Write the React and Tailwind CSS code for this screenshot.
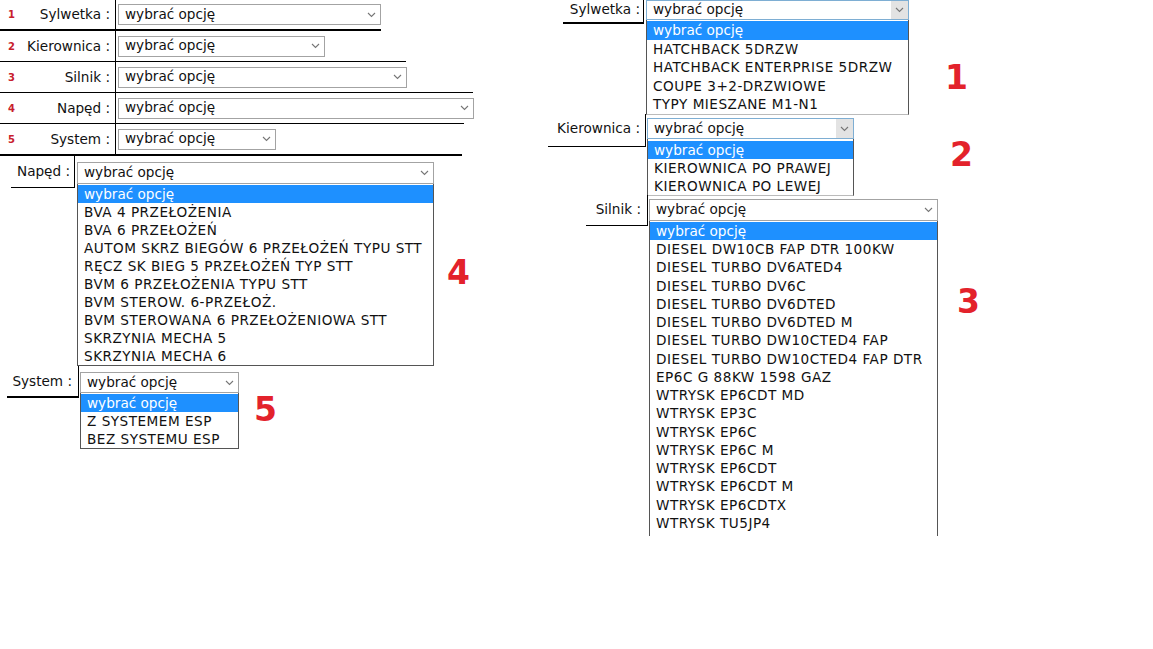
import React from "react";

const FONT = "font-['DejaVu_Sans',Verdana,sans-serif]";

function Chevron() {
  return (
    <svg width="9" height="6" viewBox="0 0 9 6" className="shrink-0">
      <path d="M1 1 L4.5 4.5 L8 1" fill="none" stroke="#767676" strokeWidth="1.1" />
    </svg>
  );
}

function Sel({ className, focused }) {
  return (
    <div
      className={`flex items-center justify-between bg-white border ${
        focused ? "border-[#7eaed3]" : "border-[#a3a3a3]"
      } ${className}`}
    >
      <span className="pl-[6px] text-[13.6px] leading-none text-[#111] whitespace-nowrap">wybrać opcję</span>
      {focused ? (
        <div className="flex items-center justify-center self-stretch w-[17px] bg-[#e3e3e3]">
          <Chevron />
        </div>
      ) : (
        <div className="pr-[4px] flex items-center">
          <Chevron />
        </div>
      )}
    </div>
  );
}

function List({ items, className, rowClass }) {
  return (
    <div className={`bg-white border-x border-b border-[#555] overflow-hidden ${className}`}>
      <div className={`bg-[#1e90ff] text-white pl-[6px] flex items-center text-[13.6px] whitespace-nowrap ${rowClass}`}>
        wybrać opcję
      </div>
      {items.map((t) => (
        <div
          key={t}
          className={`pl-[6px] flex items-center text-[13.6px] tracking-[0.5px] text-[#111] whitespace-nowrap ${rowClass}`}
        >
          {t}
        </div>
      ))}
    </div>
  );
}

function Row({ num, label, selClass, hClass }) {
  return (
    <div className={`flex items-center ${hClass}`}>
      <div className="w-[116px] self-stretch border-r border-black flex items-center justify-between pr-[5px]">
        <span className="pl-[8px] text-[10px] font-bold text-[#c8202c]">{num}</span>
        <span className="text-[13.6px] text-[#111] whitespace-nowrap">{label}</span>
      </div>
      <Sel className={`ml-[2px] h-[21px] ${selClass}`} />
    </div>
  );
}

function Big({ children, className }) {
  return (
    <div className={`absolute text-[33px] font-bold leading-none text-[#e3222b] ${className}`}>{children}</div>
  );
}

export default function App() {
  const naped = [
    "BVA 4 PRZEŁOŻENIA",
    "BVA 6 PRZEŁOŻEŃ",
    "AUTOM SKRZ BIEGÓW 6 PRZEŁOŻEŃ TYPU STT",
    "RĘCZ SK BIEG 5 PRZEŁOŻEŃ TYP STT",
    "BVM 6 PRZEŁOŻENIA TYPU STT",
    "BVM STEROW. 6-PRZEŁOŻ.",
    "BVM STEROWANA 6 PRZEŁOŻENIOWA STT",
    "SKRZYNIA MECHA 5",
    "SKRZYNIA MECHA 6",
  ];
  const system = ["Z SYSTEMEM ESP", "BEZ SYSTEMU ESP"];
  const sylwetka = [
    "HATCHBACK 5DRZW",
    "HATCHBACK ENTERPRISE 5DRZW",
    "COUPE 3+2-DRZWIOWE",
    "TYPY MIESZANE M1-N1",
  ];
  const kier = ["KIEROWNICA PO PRAWEJ", "KIEROWNICA PO LEWEJ"];
  const silnik = [
    "DIESEL DW10CB FAP DTR 100KW",
    "DIESEL TURBO DV6ATED4",
    "DIESEL TURBO DV6C",
    "DIESEL TURBO DV6DTED",
    "DIESEL TURBO DV6DTED M",
    "DIESEL TURBO DW10CTED4 FAP",
    "DIESEL TURBO DW10CTED4 FAP DTR",
    "EP6C G 88KW 1598 GAZ",
    "WTRYSK EP6CDT MD",
    "WTRYSK EP3C",
    "WTRYSK EP6C",
    "WTRYSK EP6C M",
    "WTRYSK EP6CDT",
    "WTRYSK EP6CDT M",
    "WTRYSK EP6CDTX",
    "WTRYSK TU5JP4",
  ];

  return (
    <div className={`relative w-[1153px] h-[649px] bg-white overflow-hidden ${FONT}`}>
      {/* Section A: form rows */}
      <div className="absolute left-0 top-0 flex flex-col">
        <Row num="1" label="Sylwetka :" selClass="w-[263px]" hClass="h-[29px]" />
        <div className="h-[2px] w-[381px] bg-black" />
        <Row num="2" label="Kierownica :" selClass="w-[207px]" hClass="h-[30px]" />
        <div className="h-[1px] w-[406px] bg-black" />
        <Row num="3" label="Silnik :" selClass="w-[289px]" hClass="h-[30px]" />
        <div className="h-[1px] w-[473px] bg-black" />
        <Row num="4" label="Napęd :" selClass="w-[356px]" hClass="h-[30px]" />
        <div className="h-[1px] w-[464px] bg-black" />
        <Row num="5" label="System :" selClass="w-[158px]" hClass="h-[30px]" />
        <div className="h-[2px] w-[462px] bg-black" />
      </div>

      {/* Section B: Napęd open */}
      <div className="absolute left-[11px] top-[156px] flex items-start">
        <div className="w-[64px] h-[32px] border-r border-b border-black flex items-center justify-end pr-[4px]">
          <span className="text-[13.6px] text-[#111] whitespace-nowrap">Napęd :</span>
        </div>
        <div className="ml-[2px] mt-[6px] flex flex-col">
          <Sel className="w-[357px] h-[22px]" />
          <List items={naped} className="w-[357px] pt-[1px]" rowClass="h-[18px]" />
        </div>
      </div>
      <Big className="left-[447px] top-[256px]">4</Big>

      {/* Section C: System open */}
      <div className="absolute left-[7px] top-[366px] flex items-start">
        <div className="w-[72px] h-[32px] border-r border-b-2 border-black flex items-center justify-end pr-[6px]">
          <span className="text-[13.6px] text-[#111] whitespace-nowrap">System :</span>
        </div>
        <div className="ml-[1px] mt-[6px] flex flex-col">
          <Sel className="w-[159px] h-[21px]" />
          <List items={system} className="w-[159px] pt-[1px]" rowClass="h-[18px]" />
        </div>
      </div>
      <Big className="left-[254px] top-[393px]">5</Big>

      {/* Section D: Sylwetka open */}
      <div className="absolute left-[563px] top-0 flex items-start">
        <div className="w-[81px] h-[24px] border-r border-b-2 border-black flex items-center justify-end pr-[3px] pb-[3px]">
          <span className="text-[13.6px] text-[#111] whitespace-nowrap">Sylwetka :</span>
        </div>
        <div className="ml-[2px] flex flex-col">
          <Sel focused className="w-[263px] h-[20px]" />
          <List items={sylwetka} className="w-[263px] pt-[1px] border-b-[#bbb]" rowClass="h-[18.6px]" />
        </div>
      </div>
      <Big className="left-[945px] top-[61px]">1</Big>

      {/* Section E: Kierownica open */}
      <div className="absolute left-[548px] top-[114px] flex items-start">
        <div className="w-[98px] h-[33px] border-r border-b border-black flex items-center justify-end pr-[5px] pb-[3px]">
          <span className="text-[13.6px] text-[#111] whitespace-nowrap">Kierownica :</span>
        </div>
        <div className="ml-[1px] mt-[4px] flex flex-col">
          <Sel focused className="w-[207px] h-[21px]" />
          <List items={kier} className="w-[207px] pt-[2px] border-b-[#bbb]" rowClass="h-[18px]" />
        </div>
      </div>
      <Big className="left-[950px] top-[138px]">2</Big>

      {/* Section F: Silnik open */}
      <div className="absolute left-[586px] top-[195px] flex items-start">
        <div className="w-[62px] h-[31px] border-r border-b border-black flex items-center justify-end pr-[6px] pb-[1px]">
          <span className="text-[13.6px] text-[#111] whitespace-nowrap">Silnik :</span>
        </div>
        <div className="ml-[1px] mt-[4px] flex flex-col">
          <Sel className="w-[289px] h-[22px]" />
          <List items={silnik} className="w-[289px] h-[315px] pt-[1px] border-b-0" rowClass="h-[18.25px] shrink-0" />
        </div>
      </div>
      <Big className="left-[957px] top-[285px]">3</Big>
    </div>
  );
}
